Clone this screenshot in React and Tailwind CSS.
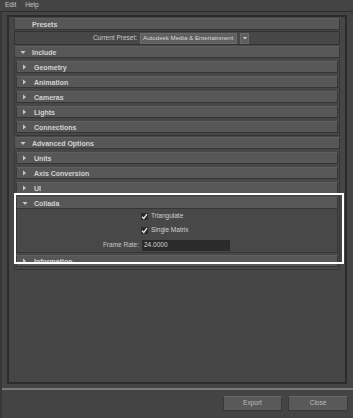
import React from "react";

const font = { fontFamily: '"Liberation Sans", Arial, sans-serif' };

function TriRight() {
  return (
    <svg width="5" height="6" viewBox="0 0 5 6">
      <path d="M1 0.5 L4 3 L1 5.5Z" fill="#c8c8c8" />
    </svg>
  );
}
function TriDown() {
  return (
    <svg width="6" height="5" viewBox="0 0 6 5">
      <path d="M0.5 1 L5.5 1 L3 4Z" fill="#c8c8c8" />
    </svg>
  );
}

function Header({ label, open, tri = true }) {
  return (
    <div className="h-[12px] flex items-center bg-[#575757] border border-[#353535] border-t-[#606060] border-l-[#3a3a3a]">
      <div className="w-[17px] pl-[5px] flex items-center">{tri ? (open ? <TriDown /> : <TriRight />) : null}</div>
      <span className="text-[7px] leading-none font-bold text-[#d2d2d2]" style={font}>{label}</span>
    </div>
  );
}

function Check({ label }) {
  return (
    <div className="flex items-center h-[14px]">
      <div className="w-[124px]" />
      <div className="w-[7px] h-[7px] bg-[#2b2b2b] flex items-center justify-center">
        <svg width="7" height="7" viewBox="0 0 7 7">
          <path d="M1 3.8 L2.8 5.5 L6 1.2" stroke="#ececec" strokeWidth="1.3" fill="none" />
        </svg>
      </div>
      <span className="ml-[3px] text-[6.5px] text-[#cfcfcf] leading-none" style={font}>{label}</span>
    </div>
  );
}

export default function App() {
  return (
    <div className="relative w-[353px] h-[418px] bg-[#444444] overflow-hidden flex flex-col" style={font}>
      {/* menu bar */}
      <div className="h-[11px] flex items-center gap-[9px] pl-[5px] text-[6.5px] text-[#c8c8c8] leading-none">
        <span>Edit</span>
        <span>Help</span>
      </div>
      <div className="h-[1px] bg-[#2e2e2e]" />
      <div className="flex-1 flex border-l-2 border-[#383838]">
        <div className="flex-1 flex flex-col">
          {/* frame */}
          <div className="mt-[3px] ml-[5px] mr-[6px] h-[369px] border-2 border-[#2c2c2c] bg-[#464646] flex flex-col pt-[1px] pl-[5px] pr-[5px] gap-[1px]">
            <Header label="Presets" tri={false} />
            <div className="h-[14px] border border-[#333333] bg-[#474747] flex items-center">
              <div className="w-[125px] text-right pr-[3px] text-[6.5px] text-[#c8c8c8] leading-none">Current Preset:</div>
              <div className="w-[97px] h-[11px] bg-[#606060] border border-[#6a6a6a] flex items-center pl-[2px] text-[6.2px] text-[#d8d8d8] leading-none whitespace-nowrap overflow-hidden">
                Autodesk Media &amp; Entertainment
              </div>
              <div className="ml-[3px] w-[9px] h-[11px] bg-[#5e5e5e] border border-[#6a6a6a] flex items-center justify-center">
                <svg width="4" height="3" viewBox="0 0 4 3"><path d="M0 0 L4 0 L2 2.5Z" fill="#d0d0d0" /></svg>
              </div>
            </div>
            <Header label="Include" open />
            <div className="border border-[#363636] border-t-0 bg-[#474747] flex flex-col gap-[3px] pt-[2px] pb-[2px] px-[1px]">
              <Header label="Geometry" />
              <Header label="Animation" />
              <Header label="Cameras" />
              <Header label="Lights" />
              <Header label="Connections" />
            </div>
            <Header label="Advanced Options" open />
            <div className="border border-[#363636] border-t-0 bg-[#474747] flex flex-col pt-[2px] pb-[2px] px-[1px]">
              <div className="flex flex-col gap-[3px]">
                <Header label="Units" />
                <Header label="Axis Conversion" />
                <Header label="UI" />
                <Header label="Collada" open />
              </div>
              <div className="h-[44px] border border-[#363636] border-t-0 bg-[#484848] flex flex-col">
                <Check label="Triangulate" />
                <Check label="Single Matrix" />
                <div className="flex items-center h-[12px] mt-[2px]">
                  <div className="w-[125px] text-right pr-[3px] text-[6.5px] text-[#c8c8c8] leading-none">Frame Rate:</div>
                  <div className="w-[88px] h-[11px] bg-[#2b2b2b] flex items-center pl-[2px] text-[6.5px] text-[#d8d8d8] leading-none">24.0000</div>
                </div>
              </div>
              <div className="mt-[2px]">
                <Header label="Information" />
              </div>
            </div>
          </div>
          {/* separator */}
          <div className="mt-[4px] h-[2px] bg-[#7a7a7a]" />
          <div className="flex justify-end gap-[6px] pr-[5px] mt-[6px]">
            <div className="w-[59px] h-[15px] bg-[#595959] border border-[#383838] border-t-[#666] flex items-center justify-center text-[6.5px] text-[#bdbdbd] leading-none">Export</div>
            <div className="w-[60px] h-[15px] bg-[#595959] border border-[#383838] border-t-[#666] flex items-center justify-center text-[6.5px] text-[#bdbdbd] leading-none">Close</div>
          </div>
        </div>
      </div>
      {/* highlight overlay */}
      <div className="absolute left-[14px] top-[193px] w-[330px] h-[71px] border-2 border-white" />
    </div>
  );
}
